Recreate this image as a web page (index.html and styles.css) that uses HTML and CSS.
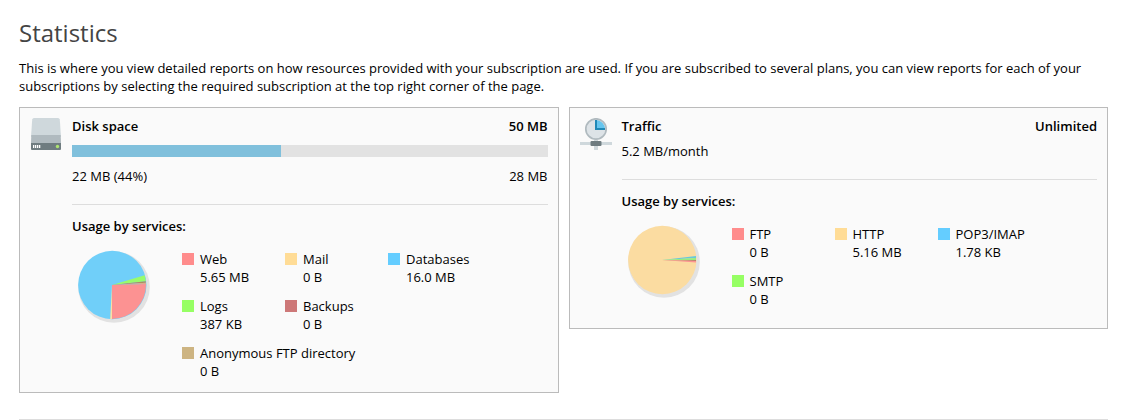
FILE: index.html
```
<!DOCTYPE html>
<html lang="en">
<head>
    <meta charset="utf-8">
    <meta name="viewport" content="width=device-width, initial-scale=1.0">
    <title>Statistics</title>
    <link rel="stylesheet" href="styles.css">
</head>
<body>
<main class="page">
    <h1 class="page-title">Statistics</h1>
    <p class="intro">This is where you view detailed reports on how resources provided with your subscription are used. If you are subscribed to several plans, you can view reports for each of your subscriptions by selecting the required subscription at the top right corner of the page.</p>

    <div class="stats">
        <section class="card">
            <svg class="card-icon" viewBox="0 0 32 32" aria-hidden="true">
                <path d="M4 0h24q1.500 0 1.800 1.500L31 19H1L2.200 1.500Q2.500 0 4 0z" fill="#cfd8dc"/>
                <path d="M1.300 17h29.400l.3 8H1z" fill="#b0babf"/>
                <path d="M1 25h30v6q0 1-1 1H2q-1 0-1-1z" fill="#6f7c80"/>
                <path d="M3 27h1.300v3H3zM5 27h1.300v3H5zM7 27h1.300v3H7zM9 27h1.300v3H9z" fill="#fff"/>
                <circle cx="27.500" cy="28.500" r="1.700" fill="#aee571"/>
            </svg>
            <div class="card-body">
                <div class="row">
                    <h2>Disk space</h2>
                    <b>50 MB</b>
                </div>
                <div class="bar"><div class="bar-used" style="width: 44%"></div></div>
                <div class="row">
                    <span>22 MB (44%)</span>
                    <span>28 MB</span>
                </div>
                <hr class="divider">
                <h3>Usage by services:</h3>
                <div class="usage">
                    <svg class="pie" viewBox="0 0 80 80" aria-hidden="true">
                        <circle cx="42" cy="42" r="35.800" fill="#e2e2e2"/>
                        <circle cx="40.300" cy="40" r="34.200" fill="#70cff9"/>
                        <path d="M40 40L72.600 30.300A34 34 0 0 1 73.800 36.200z" fill="#98fc6c"/>
                        <path d="M40 40L73.800 36.200A34 34 0 0 1 73.900 37.800z" fill="#b08a60"/>
                        <path d="M40 40L73.900 37.800A34 34 0 0 1 74 39z" fill="#d8b08c"/>
                        <path d="M40 40L74 39A34 34 0 0 1 40 74z" fill="#fc9292"/>
                        <path d="M40 40V74A34 34 0 0 1 38.200 73.900z" fill="#fbdfa3"/>
                    </svg>
                    <ul class="legend">
                        <li><i class="swatch red"></i><span>Web<br>5.65 MB</span></li>
                        <li><i class="swatch yellow"></i><span>Mail<br>0 B</span></li>
                        <li><i class="swatch blue"></i><span>Databases<br>16.0 MB</span></li>
                        <li><i class="swatch green"></i><span>Logs<br>387 KB</span></li>
                        <li class="last-in-row"><i class="swatch brown"></i><span>Backups<br>0 B</span></li>
                        <li class="wide"><i class="swatch tan"></i><span>Anonymous FTP directory<br>0 B</span></li>
                    </ul>
                </div>
            </div>
        </section>

        <section class="card">
            <svg class="card-icon" viewBox="0 0 32 32" aria-hidden="true">
                <path d="M0 24h32v3H0zM14 22h4v10h-4z" fill="#cfd8dc"/>
                <rect x="10.500" y="23" width="11" height="5" rx="1" fill="#6f7c80"/>
                <circle cx="16" cy="11" r="10.200" fill="#dde3e7" stroke="#b0babf" stroke-width="1.700"/>
                <path d="M16 11V2A9 9 0 0 1 25 11z" fill="#66c5ee"/>
                <path d="M16 2v9h9" fill="none" stroke="#2088b6" stroke-width="2"/>
            </svg>
            <div class="card-body">
                <div class="row">
                    <h2>Traffic</h2>
                    <b>Unlimited</b>
                </div>
                <p class="rate">5.2 MB/month</p>
                <hr class="divider">
                <h3>Usage by services:</h3>
                <div class="usage">
                    <svg class="pie" viewBox="0 0 80 80" aria-hidden="true">
                        <circle cx="42" cy="42" r="35.800" fill="#e2e2e2"/>
                        <circle cx="40.300" cy="40" r="34.200" fill="#fbdca1"/>
                        <path d="M40 40L74 36V38z" fill="#68c8dc"/>
                        <path d="M40 40L74 38V40z" fill="#98ec80"/>
                        <path d="M40 40H74V41z" fill="#b5846a"/>
                        <path d="M40 40L74 41V42.500z" fill="#fc9292"/>
                    </svg>
                    <ul class="legend">
                        <li><i class="swatch red"></i><span>FTP<br>0 B</span></li>
                        <li><i class="swatch yellow"></i><span>HTTP<br>5.16 MB</span></li>
                        <li><i class="swatch blue"></i><span>POP3/IMAP<br>1.78 KB</span></li>
                        <li><i class="swatch green"></i><span>SMTP<br>0 B</span></li>
                    </ul>
                </div>
            </div>
        </section>
    </div>
    <hr class="page-line">
</main>
</body>
</html>
```
FILE: styles.css
```
* {
    box-sizing: border-box;
}

body {
    margin: 0;
    background: #fff;
    color: #000;
    font: 13px/18px "Open Sans", sans-serif;
}

h1, h2, h3, p, ul {
    margin: 0;
    padding: 0;
}

hr {
    margin: 0;
    border: 0;
    border-top: 1px solid #ddd;
}

.page {
    padding: 16px 15px 0 19px;
}

.page-title {
    margin-bottom: 10px;
    color: #444;
    font-size: 24px;
    font-weight: 400;
    line-height: 33px;
}

.intro {
    margin-bottom: 12px;
}

.stats {
    display: flex;
    align-items: flex-start;
    gap: 10px;
}

.card {
    display: flex;
    flex: 1;
    gap: 10px;
    min-width: 0;
    padding: 9px 10px 12px;
    border: 1px solid #bbb;
    background: #fafafa;
}

.card-icon {
    flex: none;
    width: 32px;
    height: 32px;
    margin-top: 1px;
}

.card-body {
    flex: 1;
    min-width: 0;
}

h2, h3, b {
    font-size: 13px;
    font-weight: 600;
}

.row {
    display: flex;
    justify-content: space-between;
}

.bar {
    height: 12px;
    margin: 10px 0;
    background: #e2e2e2;
}

.bar-used {
    height: 100%;
    background: #80c0dc;
}

.rate {
    margin-top: 7px;
}

.divider {
    margin: 19px 0 12px;
}

.usage {
    display: flex;
    gap: 30px;
    min-height: 96px;
    margin-top: 10px;
}

.pie {
    flex: none;
    width: 80px;
    height: 80px;
}

.legend {
    display: grid;
    grid-template-columns: repeat(3, 103px);
    align-content: start;
    row-gap: 11px;
    padding-top: 5px;
    list-style: none;
}

.legend li {
    display: flex;
    gap: 6px;
}

.legend .last-in-row {
    grid-column: 2 / 4;
}

.legend .wide {
    grid-column: 1 / 4;
}

.swatch {
    flex: none;
    width: 12px;
    height: 12px;
    margin-top: 3px;
}

.red {
    background: #ff8c8c;
}

.yellow {
    background: #ffdc96;
}

.blue {
    background: #64cdff;
}

.green {
    background: #96ff64;
}

.brown {
    background: #cd7878;
}

.tan {
    background: #cdb482;
}

.page-line {
    margin-top: 26px;
}
```
